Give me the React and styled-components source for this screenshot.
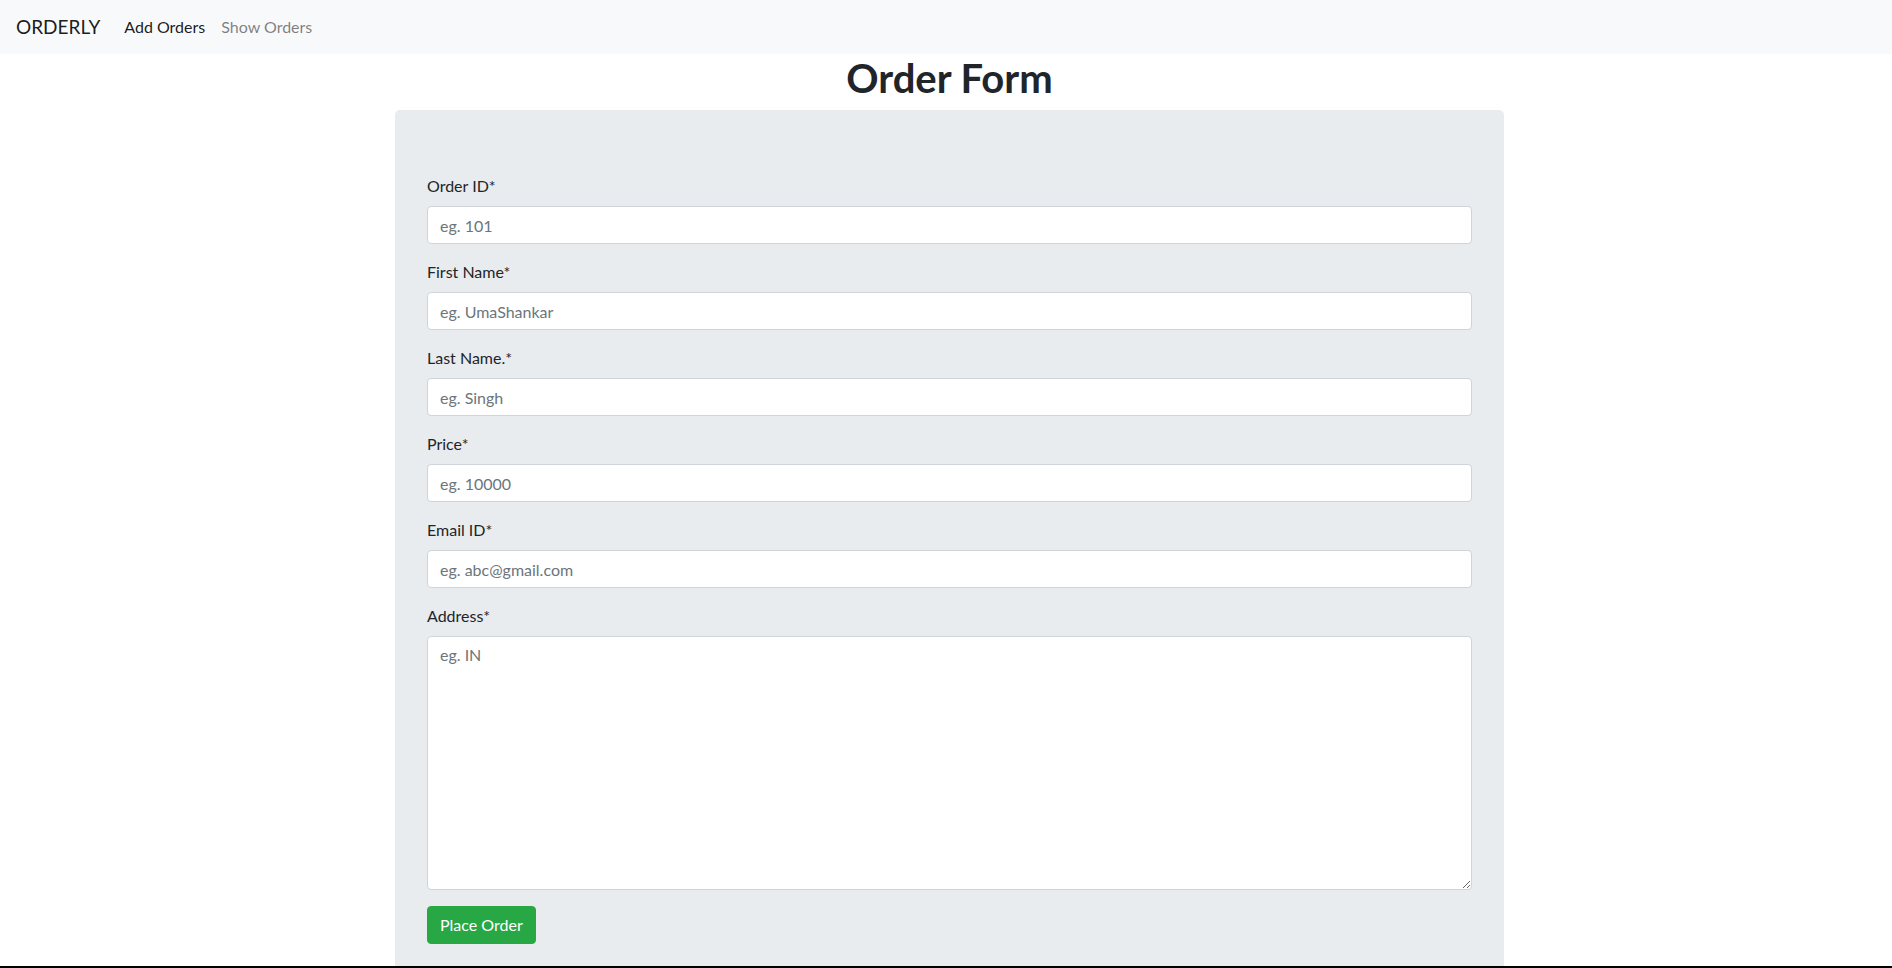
import React from "react";
import styled, { createGlobalStyle } from "styled-components";

const Global = createGlobalStyle`
  html, body { margin: 0; padding: 0; }
  body {
    font-family: "Lato", "Noto Sans", "Liberation Sans", sans-serif;
    font-size: 16px;
    line-height: 1.5;
    color: #212529;
    background: #fff;
    overflow: hidden;
  }
  * { box-sizing: border-box; }
`;

const Navbar = styled.nav`
  height: 54px;
  background: #f8f9fa;
  display: flex;
  align-items: center;
  padding: 0 16px;
`;

const Brand = styled.a`
  font-size: 19px;
  color: rgba(0, 0, 0, 0.9);
  margin-right: 16px;
  text-decoration: none;
`;

const NavLink = styled.a`
  font-size: 16px;
  padding: 8px 8px;
  text-decoration: none;
  color: ${(p) => (p.$active ? "rgba(0,0,0,0.9)" : "rgba(0,0,0,0.5)")};
`;

const Main = styled.main`
  padding-left: 7px;
`;

const Title = styled.h1`
  margin: 0 0 8px;
  font-size: 40px;
  font-weight: 700;
  line-height: 48px;
  text-align: center;
`;

const Card = styled.form`
  width: 1109px;
  margin: 0 auto;
  background: #e9ecef;
  border-radius: 5px;
  padding: 64px 32px;
`;

const Group = styled.div`
  margin-bottom: 16px;
`;

const Label = styled.label`
  display: block;
  font-size: 16px;
  line-height: 24px;
  margin-bottom: 8px;
`;

const Input = styled.input`
  display: block;
  width: 100%;
  height: 38px;
  padding: 6px 12px;
  font-family: inherit;
  font-size: 16px;
  line-height: 24px;
  color: #495057;
  background: #fff;
  border: 1px solid #ced4da;
  border-radius: 4px;
  outline: none;
  &::placeholder { color: #6c757d; }
`;

const TextArea = styled.textarea`
  display: block;
  width: 100%;
  height: 254px;
  padding: 6px 12px;
  font-family: inherit;
  font-size: 16px;
  line-height: 24px;
  color: #495057;
  background: #fff;
  border: 1px solid #ced4da;
  border-radius: 4px;
  outline: none;
  &::placeholder { color: #6c757d; }
`;

const Button = styled.button`
  height: 38px;
  min-width: 108px;
  padding: 0 12px;
  white-space: nowrap;
  font-family: inherit;
  font-size: 16px;
  line-height: 24px;
  color: #fff;
  background: #28a745;
  border: 1px solid #28a745;
  border-radius: 4px;
`;

const BottomEdge = styled.div`
  position: fixed;
  left: 0;
  right: 0;
  bottom: 0;
  height: 2px;
  background: #000;
`;

const fields = [
  ["Order ID*", "eg. 101"],
  ["First Name*", "eg. UmaShankar"],
  ["Last Name.*", "eg. Singh"],
  ["Price*", "eg. 10000"],
  ["Email ID*", "eg. abc@gmail.com"],
];

export default function App() {
  return (
    <>
      <Global />
      <Navbar>
        <Brand href="#">ORDERLY</Brand>
        <NavLink href="#" $active>Add Orders</NavLink>
        <NavLink href="#">Show Orders</NavLink>
      </Navbar>
      <Main>
        <Title>Order Form</Title>
        <Card onSubmit={(e) => e.preventDefault()}>
          {fields.map(([label, ph]) => (
            <Group key={label}>
              <Label>{label}</Label>
              <Input placeholder={ph} />
            </Group>
          ))}
          <Group>
            <Label>Address*</Label>
            <TextArea placeholder="eg. IN" />
          </Group>
          <Button type="submit">Place Order</Button>
        </Card>
      </Main>
      <BottomEdge />
    </>
  );
}
